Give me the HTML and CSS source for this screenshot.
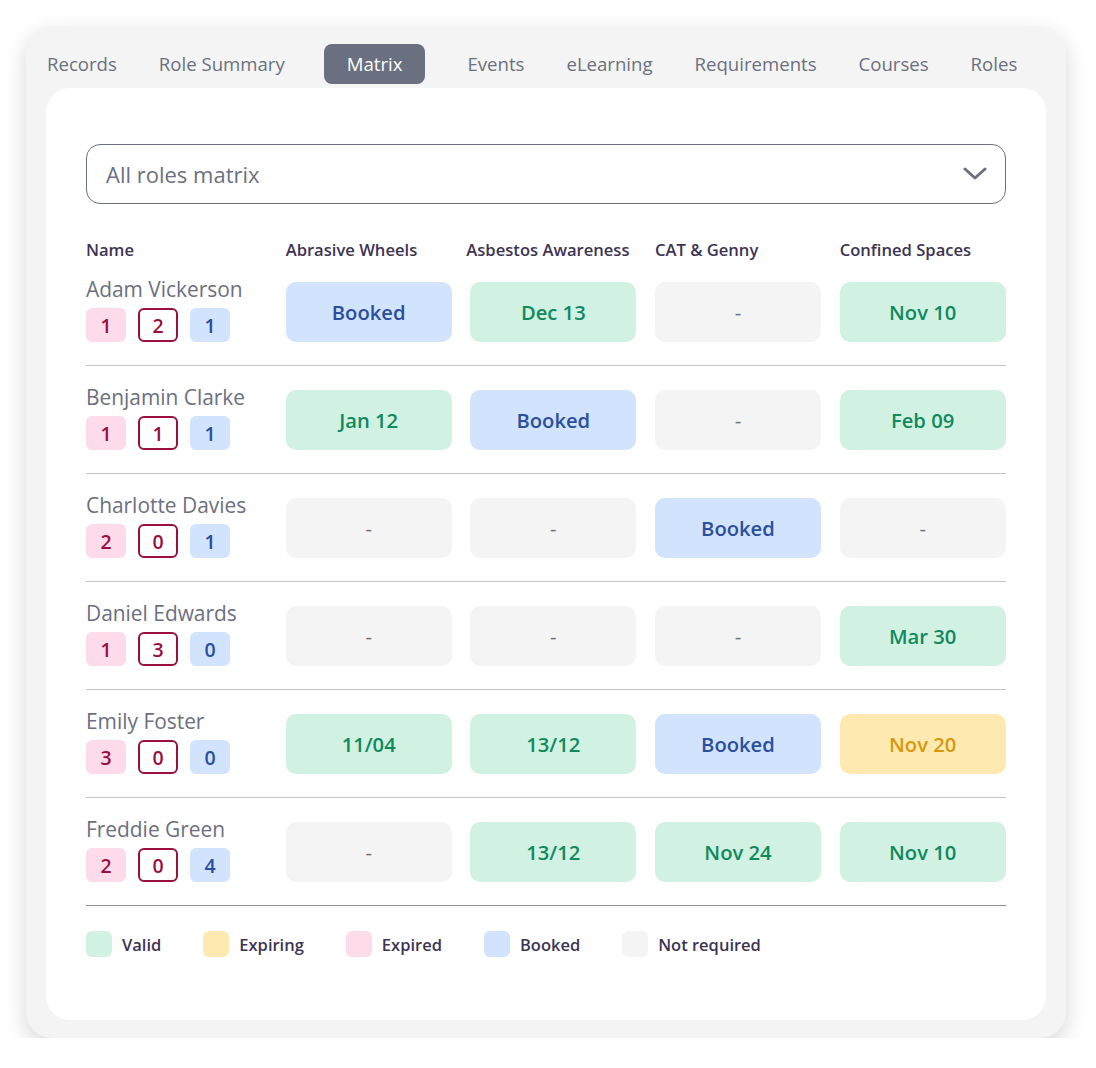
FILE: index.html
```html
<!DOCTYPE html>
<html lang="en">
<head>
<meta charset="utf-8">
<title>Matrix</title>
<link rel="stylesheet" href="styles.css">
</head>
<body>
<div class="frame">
  <nav class="tabs">
    <span class="tab">Records</span>
    <span class="tab">Role Summary</span>
    <span class="tab active">Matrix</span>
    <span class="tab">Events</span>
    <span class="tab">eLearning</span>
    <span class="tab">Requirements</span>
    <span class="tab">Courses</span>
    <span class="tab">Roles</span>
  </nav>
  <main class="panel">
    <div class="select">
      <span>All roles matrix</span>
      <svg class="chev" width="24" height="14" viewBox="0 0 24 14"><polyline points="2,2 12,11 22,2" fill="none" stroke="#6b7080" stroke-width="3" stroke-linecap="round" stroke-linejoin="round"/></svg>
    </div>

    <div class="grid head">
      <div>Name</div>
      <div>Abrasive Wheels</div>
      <div class="shift">Asbestos Awareness</div>
      <div>CAT &amp; Genny</div>
      <div>Confined Spaces</div>
    </div>

    <div class="grid row">
      <div class="who"><div class="name">Adam Vickerson</div><div class="badges"><span class="b exp">1</span><span class="b out">2</span><span class="b bk">1</span></div></div>
      <div class="c booked">Booked</div>
      <div class="c valid">Dec 13</div>
      <div class="c none">-</div>
      <div class="c valid">Nov 10</div>
    </div>
    <div class="grid row">
      <div class="who"><div class="name">Benjamin Clarke</div><div class="badges"><span class="b exp">1</span><span class="b out">1</span><span class="b bk">1</span></div></div>
      <div class="c valid">Jan 12</div>
      <div class="c booked">Booked</div>
      <div class="c none">-</div>
      <div class="c valid">Feb 09</div>
    </div>
    <div class="grid row">
      <div class="who"><div class="name">Charlotte Davies</div><div class="badges"><span class="b exp">2</span><span class="b out">0</span><span class="b bk">1</span></div></div>
      <div class="c none">-</div>
      <div class="c none">-</div>
      <div class="c booked">Booked</div>
      <div class="c none">-</div>
    </div>
    <div class="grid row">
      <div class="who"><div class="name">Daniel Edwards</div><div class="badges"><span class="b exp">1</span><span class="b out">3</span><span class="b bk">0</span></div></div>
      <div class="c none">-</div>
      <div class="c none">-</div>
      <div class="c none">-</div>
      <div class="c valid">Mar 30</div>
    </div>
    <div class="grid row">
      <div class="who"><div class="name">Emily Foster</div><div class="badges"><span class="b exp">3</span><span class="b out">0</span><span class="b bk">0</span></div></div>
      <div class="c valid">11/04</div>
      <div class="c valid">13/12</div>
      <div class="c booked">Booked</div>
      <div class="c expiring">Nov 20</div>
    </div>
    <div class="grid row last">
      <div class="who"><div class="name">Freddie Green</div><div class="badges"><span class="b exp">2</span><span class="b out">0</span><span class="b bk">4</span></div></div>
      <div class="c none">-</div>
      <div class="c valid">13/12</div>
      <div class="c valid">Nov 24</div>
      <div class="c valid">Nov 10</div>
    </div>

    <div class="legend">
      <span class="li"><span class="sw valid"></span>Valid</span>
      <span class="li"><span class="sw expiring"></span>Expiring</span>
      <span class="li"><span class="sw expired"></span>Expired</span>
      <span class="li"><span class="sw booked"></span>Booked</span>
      <span class="li"><span class="sw none"></span>Not required</span>
    </div>
  </main>
</div>
</body>
</html>
```
FILE: styles.css
```css
* { box-sizing: border-box; }
body {
  margin: 0;
  background: #ffffff;
  font-family: "Open Sans", "Lato", sans-serif;
}
.frame {
  margin: 26px 0 0 26px;
  width: 1040px;
  height: 1012px;
  background: #f4f4f4;
  border-radius: 26px;
  box-shadow: 0 8px 22px rgba(0,0,0,0.16);
  padding: 18px 20px 18px 20px;
  display: flex;
  flex-direction: column;
}
.tabs {
  display: flex;
  align-items: center;
  gap: 42px;
  margin: 0 -20px 4px -20px;
  padding-left: 21px;
  height: 40px;
}
.tab {
  height: 40px;
  line-height: 40px;
  font-size: 18.6px;
  color: #6b7080;
  border-radius: 8px;
  white-space: nowrap;
}
.tab.active {
  background: #6b7080;
  color: #ffffff;
  padding: 0 23px;
  margin-left: -3px;
}
.panel {
  flex: 1;
  background: #ffffff;
  border-radius: 24px;
  padding: 56px 40px 0 40px;
}
.select {
  height: 60px;
  border: 1px solid #6b7080;
  border-radius: 14px;
  display: flex;
  align-items: center;
  justify-content: space-between;
  padding: 0 18px 0 19px;
  font-size: 22px;
  color: #6b7080;
}
.grid {
  display: grid;
  grid-template-columns: 181px repeat(4, 166px);
  column-gap: 18.67px;
}
.head {
  margin-top: 38px;
  line-height: 16px;
  font-size: 16.6px;
  font-weight: 600;
  color: #3d3454;
  white-space: nowrap;
}
.head .shift { margin-left: -4px; }
.row {
  padding: 24px 0 23px 0;
  border-bottom: 1px solid #c4c4c4;
}
.row.last { border-bottom-color: #8f8c99; }
.who { height: 60px; }
.name {
  font-size: 20.9px;
  line-height: 16px;
  height: 16px;
  margin-top: -1px;
  color: #6b7080;
  white-space: nowrap;
}
.badges {
  display: flex;
  gap: 12px;
  margin-top: 11px;
}
.b {
  width: 40px;
  height: 34px;
  border-radius: 6px;
  display: flex;
  align-items: center;
  justify-content: center;
  font-size: 19.5px;
  font-weight: 600;
}
.b.exp { background: #fddbea; color: #9a0f3f; }
.b.out { background: #ffffff; color: #9a0f3f; border: 2px solid #9a0f3f; }
.b.bk { background: #d2e3fd; color: #2a4f9e; }
.c {
  height: 60px;
  border-radius: 10px;
  display: flex;
  align-items: center;
  justify-content: center;
  font-size: 20.2px;
  font-weight: 600;
}
.c.booked { background: #d2e3fd; color: #2a4f9e; }
.c.valid { background: #d1f1e3; color: #0f8a5c; }
.c.none { background: #f4f4f4; color: #6b7080; font-weight: 400; }
.c.expiring { background: #feeab0; color: #d9980b; }
.legend {
  display: flex;
  align-items: center;
  margin-top: 25px;
  gap: 42px;
}
.li {
  display: flex;
  align-items: center;
  gap: 10px;
  font-size: 16.5px;
  font-weight: 600;
  color: #3d3454;
}
.sw {
  width: 26px;
  height: 26px;
  border-radius: 6px;
}
.sw.valid { background: #d1f1e3; }
.sw.expiring { background: #feeab0; }
.sw.expired { background: #fddbea; }
.sw.booked { background: #d2e3fd; }
.sw.none { background: #f4f4f4; }
```
